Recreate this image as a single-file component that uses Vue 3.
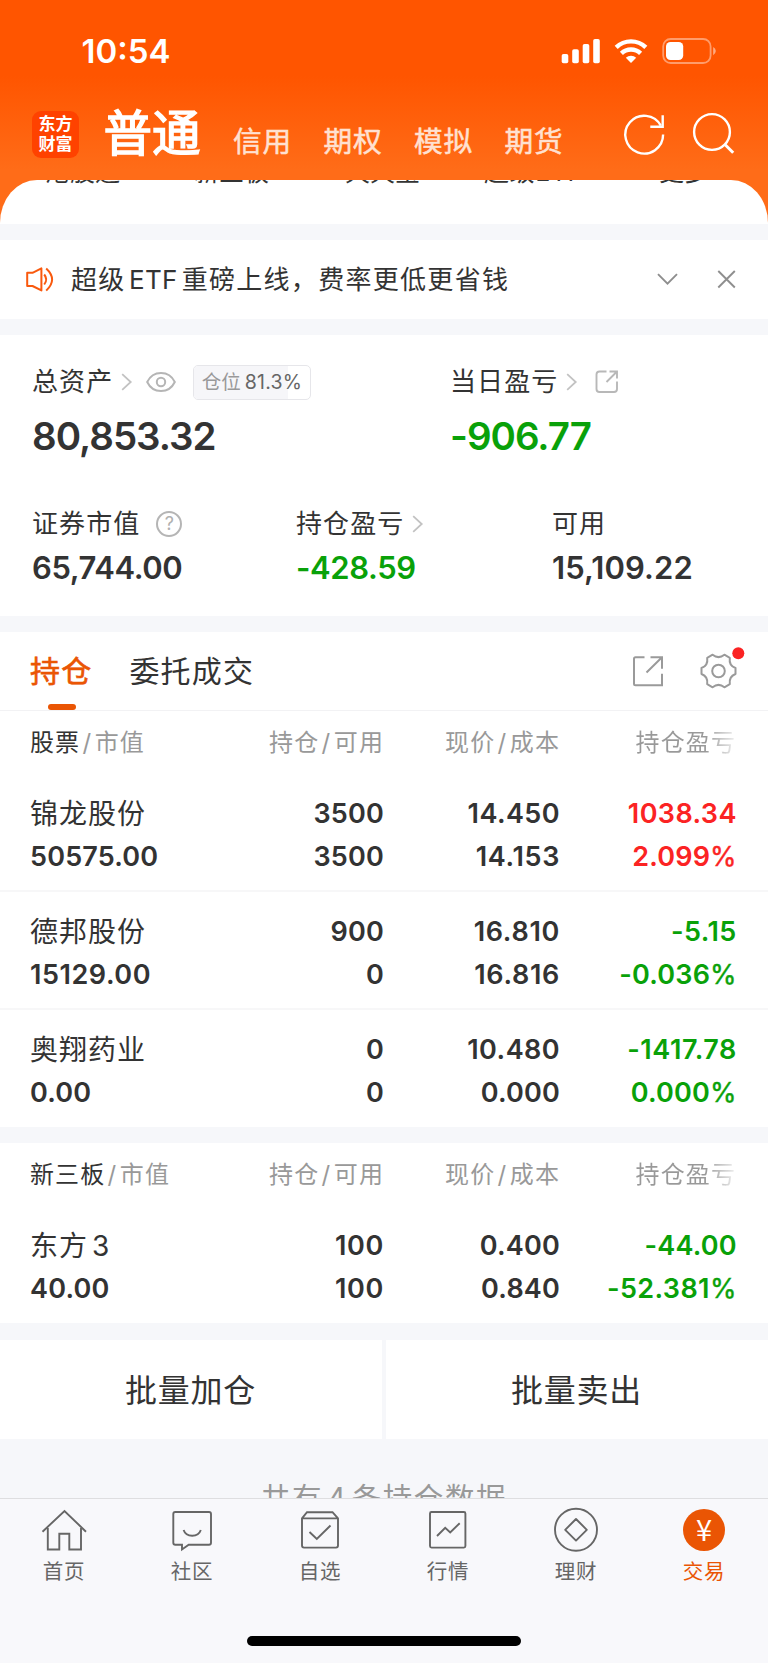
<script setup>
const shortcuts = [
  { text: '港股通', cls: 's1' },
  { text: '新三板', cls: 's2' },
  { text: '天天宝', cls: 's3' },
  { text: '超级ETF', cls: 's4' },
  { text: '更多', cls: 's5' },
]
const modes = ['信用', '期权', '模拟', '期货']
const position = 81.3

const groups = [
  {
    title: '股票',
    rows: [
      { name: '锦龙股份', value: '50575.00', hold: '3500', usable: '3500', price: '14.450', cost: '14.153', profit: '1038.34', rate: '2.099', trend: 'up' },
      { name: '德邦股份', value: '15129.00', hold: '900', usable: '0', price: '16.810', cost: '16.816', profit: '-5.15', rate: '-0.036', trend: 'down' },
      { name: '奥翔药业', value: '0.00', hold: '0', usable: '0', price: '10.480', cost: '0.000', profit: '-1417.78', rate: '0.000', trend: 'down' },
    ],
  },
  {
    title: '新三板',
    rows: [
      { name: '东方', suffix: '3', value: '40.00', hold: '100', usable: '100', price: '0.400', cost: '0.840', profit: '-44.00', rate: '-52.381', trend: 'down' },
    ],
  },
]

// Narrow "1" digits get a little extra tracking so columns stay even.
const tracking = (s) => {
  const ones = s.split('1').length - 1
  return { letterSpacing: (0.18 + (ones * 1.5) / s.length).toFixed(2) + 'px' }
}
</script>

<template>
  <div class="screen">
    <header class="top">
      <div class="status">
        <span class="clock">10:54</span>
        <svg class="status-icons" width="160" height="30" viewBox="558 36 160 30">
          <g fill="#fff">
            <rect x="561.7" y="54" width="6.6" height="9.2" rx="1.8" />
            <rect x="572.2" y="49.3" width="6.6" height="13.9" rx="1.8" />
            <rect x="582.7" y="44" width="6.6" height="19.2" rx="1.8" />
            <rect x="593.2" y="39" width="6.6" height="24.2" rx="1.8" />
            <path d="M631 63 L625.8 57.8 A7.6 7.6 0 0 1 636.2 57.8 Z" />
          </g>
          <g fill="none" stroke="#fff" stroke-width="4.4">
            <path d="M616.2 47.4 A21.3 21.3 0 0 1 645.8 47.4" />
            <path d="M621.4 53.4 A13.8 13.8 0 0 1 640.6 53.4" />
          </g>
          <rect x="663.2" y="39" width="47.4" height="24" rx="7.5" fill="none" stroke="#fff" stroke-opacity=".42" stroke-width="1.8" />
          <path d="M713.2 47 Q715.8 48.6 715.8 51 T713.2 55.2 Z" fill="#fff" fill-opacity=".5" />
          <rect x="666" y="42" width="17.2" height="18" rx="4.5" fill="#fff" />
        </svg>
      </div>
      <div class="nav">
        <div class="logo"><span>东方</span><span>财富</span></div>
        <span class="mode-active">普通</span>
        <span v-for="m in modes" :key="m" class="mode">{{ m }}</span>
        <svg class="nav-icons" width="120" height="52" viewBox="620 108 120 52" fill="none" stroke="#fff" stroke-width="2.4">
          <path d="M660.8 125.6 A18.9 18.9 0 1 0 663.1 134.6" />
          <path d="M662.7 115.2 V126.8 H650.3" />
          <circle cx="712" cy="132" r="17.9" />
          <path d="M724.7 144.3 L733.2 152.8" stroke-width="3" />
        </svg>
      </div>
    </header>

    <div class="sheet-back">
      <div class="sheet">
        <div class="shortcuts">
          <span v-for="s in shortcuts" :key="s.text" :class="s.cls">{{ s.text }}</span>
        </div>
      </div>
    </div>

    <section class="notice">
      <svg class="speaker" width="28" height="26" viewBox="26 266 28 26" fill="none" stroke="#f9590e" stroke-width="2" stroke-linejoin="round">
        <path d="M27.2 272.8 H32.5 L41.4 268.4 V290.4 L32.5 286 H27.2 Z" />
        <path d="M44.2 274.5 Q48.2 279.3 44.2 284.5" />
        <path d="M46.2 268.4 Q58 279.3 46.2 290.6" />
      </svg>
      <p>超级<span class="etf">ETF</span>重磅上线，费率更低更省钱</p>
      <svg class="notice-actions" width="80" height="20" viewBox="657 269 80 20" fill="none" stroke="#8e8e8e" stroke-width="1.9">
        <path d="M658 274.2 L667.5 283.7 L677 274.2" />
        <path d="M718.3 271 L734.8 287.5 M734.8 271 L718.3 287.5" />
      </svg>
    </section>

    <section class="assets">
      <div class="row-a">
        <div class="cell">
          <div class="label">
            <span>总资产</span>
            <svg class="chev" width="12" height="18" viewBox="0 0 12 18"><path d="M1.2 1.2 L9.7 9 L1.2 16.8" /></svg>
            <svg class="eye" width="30" height="20" viewBox="0 0 30 20">
              <path d="M1.2 10 C7 -2 23 -2 28.8 10 C23 22 7 22 1.2 10 Z" />
              <circle cx="15" cy="10" r="4.2" />
            </svg>
            <div class="badge">
              <div class="badge-fill" :style="{ width: position + '%' }"></div>
              <span class="badge-label">仓位</span><span class="badge-num">{{ position }}%</span>
            </div>
          </div>
          <div class="big">80,853.32</div>
        </div>
        <div class="cell">
          <div class="label">
            <span>当日盈亏</span>
            <svg class="chev" width="12" height="18" viewBox="0 0 12 18"><path d="M1.2 1.2 L9.7 9 L1.2 16.8" /></svg>
            <svg class="share" width="24" height="24" viewBox="0 0 24 24">
              <path d="M11.5 1.5 H4.5 Q1.5 1.5 1.5 4.5 V19 Q1.5 22 4.5 22 H19 Q22 22 22 19 V11.5" />
              <path d="M14.5 1.5 H22 V8.5 M22 1.5 L11.5 12" />
            </svg>
          </div>
          <div class="big green">-906.77</div>
        </div>
      </div>
      <div class="row-b">
        <div class="cell">
          <div class="label"><span>证券市值</span><span class="help">?</span></div>
          <div class="mid">65,744.00</div>
        </div>
        <div class="cell">
          <div class="label">
            <span>持仓盈亏</span>
            <svg class="chev" width="12" height="18" viewBox="0 0 12 18"><path d="M1.2 1.2 L9.7 9 L1.2 16.8" /></svg>
          </div>
          <div class="mid green">-428.59</div>
        </div>
        <div class="cell">
          <div class="label"><span>可用</span></div>
          <div class="mid usable">15,109.22</div>
        </div>
      </div>
    </section>

    <nav class="tabs">
      <div class="tab active">持仓</div>
      <div class="tab">委托成交</div>
      <svg class="tab-icons" width="114" height="44" viewBox="632 646 114 44" fill="none" stroke="#9a9a9a" stroke-width="2">
        <path d="M644.5 657.3 H635.5 Q634 657.3 634 658.8 V683.7 Q634 685.2 635.5 685.2 H662 V673.7" />
        <path d="M650.5 657.3 H662 V668.7 M662 657.3 L646.5 672.5" />
        <circle cx="718.5" cy="671" r="6.3" />
        <path stroke-linejoin="round" d="M712.6 654.7 Q718.5 659.5 724.4 654.7 L729.8 657.8 Q728.7 665.5 735.5 668 V674 Q728.7 676.5 729.8 684.2 L724.4 687.3 Q718.5 682.5 712.6 687.3 L707.2 684.2 Q708.3 676.5 701.5 674 V668 Q708.3 665.5 707.2 657.8 Z" />
        <circle cx="738.3" cy="653.3" r="6" fill="#fb2323" stroke="none" />
      </svg>
    </nav>

    <section v-for="g in groups" :key="g.title" class="table">
      <div class="thead">
        <span><b>{{ g.title }}</b><i>/</i>市值</span>
        <span>持仓<i>/</i>可用</span>
        <span>现价<i>/</i>成本</span>
        <span class="fade">持仓盈亏</span>
      </div>
      <div v-for="r in g.rows" :key="r.name" class="trow">
        <div><p class="name">{{ r.name }}<span v-if="r.suffix" class="suffix">{{ r.suffix }}</span></p><p :style="tracking(r.value)">{{ r.value }}</p></div>
        <div><p :style="tracking(r.hold)">{{ r.hold }}</p><p :style="tracking(r.usable)">{{ r.usable }}</p></div>
        <div><p :style="tracking(r.price)">{{ r.price }}</p><p :style="tracking(r.cost)">{{ r.cost }}</p></div>
        <div :class="r.trend"><p :style="tracking(r.profit)">{{ r.profit }}</p><p :style="tracking(r.rate)">{{ r.rate }}<span class="pct">%</span></p></div>
      </div>
    </section>

    <div class="batch">
      <button>批量加仓</button>
      <button>批量卖出</button>
    </div>

    <div class="total">共有<span>4</span>条持仓数据</div>

    <footer class="bar">
      <div class="items">
        <div class="item">
          <svg viewBox="0 0 48 48"><path d="M2.5 25.7 L24.5 5 L46 25.7" /><path d="M7.8 22 V43.5 H19.3 V27.7 H29.3 V43.5 H41 V22" /></svg>
          <span>首页</span>
        </div>
        <div class="item">
          <svg viewBox="0 0 48 48"><path d="M7.3 6 H41 Q43 6 43 8 V36.7 Q43 38.7 41 38.7 H20.7 L14 43.5 V38.7 H7.3 Q5.3 38.7 5.3 36.7 V8 Q5.3 6 7.3 6 Z" /><path d="M15.6 24 Q17.5 29.7 24.2 29.7 T32.8 24" /></svg>
          <span>社区</span>
        </div>
        <div class="item">
          <svg viewBox="0 0 48 48"><path d="M6 12.4 L11 6.2 H36.5 L42 12.4 V39.6 Q42 41.6 40 41.6 H8 Q6 41.6 6 39.6 Z M6 12.4 H42" /><path d="M13.5 26 L20.8 33 L34.5 19.5" /></svg>
          <span>自选</span>
        </div>
        <div class="item">
          <svg viewBox="0 0 48 48"><rect x="6" y="6" width="35.4" height="35.6" rx="1.5" /><path d="M13 30 L21.2 21.8 L26.2 26.5 L35.7 17.2" /></svg>
          <span>行情</span>
        </div>
        <div class="item">
          <svg viewBox="0 0 48 48"><circle cx="24" cy="23.8" r="21" /><path stroke-linejoin="round" d="M24 13 L34.8 23.8 L24 34.6 L13.2 23.8 Z" /></svg>
          <span>理财</span>
        </div>
        <div class="item on">
          <div class="coin">¥</div>
          <span>交易</span>
        </div>
      </div>
      <div class="home-indicator"></div>
    </footer>
  </div>
</template>

<style>
html, body { margin: 0; background: #f6f7fa; }
</style>

<style scoped>
* { box-sizing: border-box; }
p { margin: 0; }
svg { display: block; flex: none; }
.screen {
  width: 768px;
  height: 1663px;
  overflow: hidden;
  display: flex;
  flex-direction: column;
  background: #f6f7fa;
  color: #333;
  font-family: "Inter", "Noto Sans CJK SC", sans-serif;
  white-space: nowrap;
}
.top {
  height: 180px;
  flex: none;
  background: linear-gradient(#ff5500 0, #ff5500 76px, #ff6c18 170px, #ff6c18 180px);
}
.status { height: 102px; display: flex; justify-content: space-between; padding: 36px 50px 0 81.5px; }
.clock { color: #fff; font-size: 33px; font-weight: 600; line-height: 31px; }
.nav { height: 64px; display: flex; align-items: center; padding-left: 32px; color: #fff; }
.logo {
  width: 47px; height: 47px; border-radius: 9px; background: #ff4200;
  display: flex; flex-direction: column; align-items: center; justify-content: center;
  font-size: 17px; font-weight: 700; line-height: 20px;
}
.mode-active { font-size: 48.5px; line-height: 66px; margin: 0 32px 0 24.5px; width: 97.5px; -webkit-text-stroke: 1.5px #fff; }
.mode {
  font-size: 28.7px; line-height: 40px; letter-spacing: .8px; -webkit-text-stroke: .5px #ffe1d1;
  color: #ffe1d1; width: 59px; margin: 16px 31.5px 0 0;
}
.nav-icons { margin-left: 24.8px; }

.sheet-back { height: 44px; flex: none; background: #ff6c18; }
.sheet { height: 44px; border-radius: 37px 37px 0 0 / 43px 43px 0 0; background: #fff; overflow: hidden; }
.shortcuts { display: flex; height: 24px; margin-top: -20px; font-size: 25px; line-height: 24px; }
.shortcuts span { flex: none; }
.s1 { margin-left: 45px; width: 149px; }
.s2 { width: 151px; }
.s3 { width: 139px; }
.s4 { width: 175px; letter-spacing: .6px; }

.notice { height: 79px; margin-top: 16px; flex: none; background: #fff; display: flex; align-items: center; padding: 0 31px 0 26px; }
.notice p { font-size: 26px; letter-spacing: 1.3px; line-height: 40px; margin-left: 17px; }
.etf { margin: 0 4px 0 3.4px; letter-spacing: .3px; }
.speaker { margin-bottom: 1px; }
.notice-actions { margin: 0 0 2px auto; }

.assets { height: 281px; margin-top: 16px; flex: none; background: #fff; }
.row-a { display: grid; grid-template-columns: 418px 1fr; padding: 27px 0 0 32px; }
.row-b { display: grid; grid-template-columns: 264px 256px 1fr; padding: 43px 0 0 32px; }
.label { height: 40px; display: flex; align-items: center; font-size: 26px; letter-spacing: 1.1px; line-height: 40px; }
.chev { fill: none; stroke: #c2c2c2; stroke-width: 1.8; margin-left: 7.5px; }
.eye { fill: none; stroke: #b5b5b5; stroke-width: 2; margin-left: 13.5px; }
.share { fill: none; stroke: #b8b8b8; stroke-width: 1.9; margin-left: 17px; }
.badge {
  position: relative; width: 118px; height: 35px; margin-left: 16.5px; border: 1px solid #e6e6ea; border-radius: 5px;
  overflow: hidden; display: flex; align-items: center; padding-left: 8px;
  font-size: 19.5px; letter-spacing: 0; color: #666;
}
.badge-fill { position: absolute; left: 0; top: 0; bottom: 0; background: #f6f6f9; }
.badge-label { position: relative; color: #999; margin-right: 4px; }
.badge-num { position: relative; letter-spacing: .2px; }
.big { font-size: 38.5px; font-weight: 600; line-height: 50px; margin-top: 9px; letter-spacing: -1px; }
.mid { font-size: 31px; font-weight: 600; line-height: 40px; margin-top: 4px; letter-spacing: -.4px; }
.usable { letter-spacing: .1px; }
.green { color: #09a109; }
.help {
  width: 26px; height: 26px; margin-left: 16px; border: 2px solid #b5b5b5; border-radius: 50%;
  color: #b0b0b0; font-size: 18px; line-height: 22px; text-align: center; letter-spacing: 0;
}

.tabs { height: 79px; margin-top: 16px; flex: none; background: #fff; border-bottom: 1px solid #f2f2f4; display: flex; padding-left: 30px; }
.tab { font-size: 30px; letter-spacing: 1.2px; line-height: 79px; margin-right: 37px; }
.tab.active { position: relative; color: #ea5504; -webkit-text-stroke: .6px #ea5504; }
.tab.active::after { content: ""; position: absolute; left: 17.5px; bottom: 0; width: 28px; height: 6px; border-radius: 3px; background: #ea5504; }
.tab-icons { margin: 14px 22px 0 auto; }

.table { flex: none; background: #fff; }
.table + .table { margin-top: 16px; }
.thead, .trow { display: grid; grid-template-columns: 200px 154px 176px 176px; padding-left: 30px; }
.thead { height: 63px; line-height: 64px; font-size: 24px; letter-spacing: 1.1px; color: #999; }
.thead > span + span { text-align: right; }
.thead b { font-weight: 400; color: #333; }
.thead i { font-style: normal; margin: 0 2.5px 0 2.3px; }
.fade {
  background: linear-gradient(90deg, #999 145px, rgba(153, 153, 153, .15) 176px);
  -webkit-background-clip: text; background-clip: text; color: transparent;
}
.trow { height: 118px; padding-top: 18px; border-bottom: 2px solid #f7f7f8; font-size: 27px; font-weight: 600; }
.trow:last-child { height: 117px; border-bottom: none; }
.trow p { line-height: 43px; height: 43px; }
.trow > div + div { text-align: right; }
.trow > div:last-child { margin-right: -.8px; }
.trow .name { font-size: 28px; font-weight: 400; letter-spacing: 1px; line-height: 44px; }
.suffix { margin-left: 4px; }
.pct { font-weight: 400; -webkit-text-stroke: .4px; }
.up { color: #fb2323; }
.down { color: #09a109; }

.batch { display: grid; grid-template-columns: 1fr 1fr; gap: 4px; margin-top: 17px; height: 99px; flex: none; }
.batch button { border: 0; padding: 2px 1px 0 0; background: #fff; color: #333; font: 400 32px/97px "Inter", "Noto Sans CJK SC", sans-serif; letter-spacing: .8px; }
.total { height: 59px; flex: none; overflow: hidden; padding-top: 39px; text-align: center; color: #999; font-size: 29.5px; letter-spacing: 1.6px; line-height: 40px; }
.total span { margin: 0 4px; }

.bar { height: 165px; flex: none; background: #f8f8fb; border-top: 1px solid #dedee0; }
.items { display: grid; grid-template-columns: repeat(6, 128px); height: 137px; padding-top: 7px; }
.item { display: flex; flex-direction: column; align-items: center; color: #666; font-size: 20.5px; letter-spacing: .7px; line-height: 28px; }
.item svg { width: 48px; height: 48px; margin-bottom: 4px; fill: none; stroke: #666; stroke-width: 1.9; }
.item.on { color: #ea5504; }
.coin { width: 42px; height: 42px; margin: 3px 0 7px; border-radius: 50%; background: #ea5504; color: #fff; font-family: "Noto Sans CJK SC", sans-serif; font-size: 29px; line-height: 38px; text-align: center; letter-spacing: 0; }
.home-indicator { width: 274px; height: 10px; margin: 0 auto; border-radius: 5px; background: #000; }
</style>
